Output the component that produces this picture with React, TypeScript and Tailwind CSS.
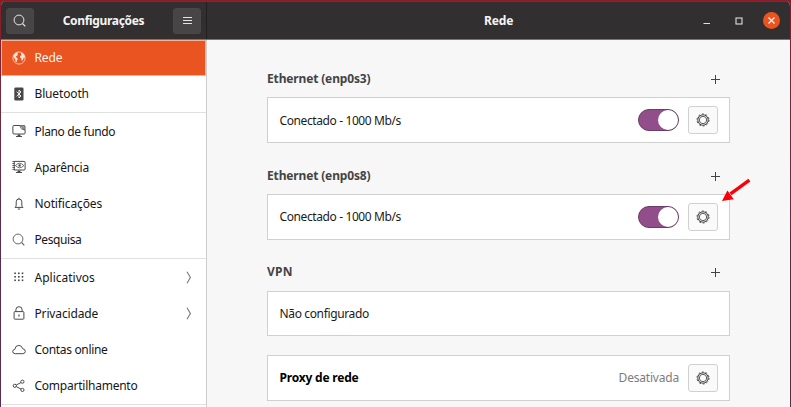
import type { ReactNode } from 'react';

const ink = '#4a4a4a';

function SearchIcon({ color }: { color: string }) {
  return (
    <svg width="14" height="14" viewBox="0 0 14 14" fill="none" stroke={color} strokeWidth="1">
      <circle cx="6" cy="6" r="4.9" />
      <path d="M9.5 9.5 L12.3 12.3" strokeWidth="1.2" />
    </svg>
  );
}

function GlobeIcon() {
  return (
    <svg width="14" height="14" viewBox="0 0 14 14">
      <circle cx="7" cy="7" r="6.1" fill="none" stroke="#fbcdbb" strokeWidth="0.9" />
      <path d="M1.2 4.6 L3 2.2 L5.4 1.2 L6.2 2 L5.2 3 L6 3.9 L4.6 5 L3.7 5.8 L5 6.9 L5.9 7.8 L5 9.6 L4.6 11.6 L3.4 10.2 L3.1 8 L1.5 6.2Z M9 1.4 L11.4 2.7 L12.8 5 L12.9 7.2 L11.9 6.2 L11.2 8.2 L10.1 10 L9.4 9 L9.3 7.3 L8 6.6 L8.1 5.1 L9.6 4.2 L9 3.1Z" fill="#fde4da" />
    </svg>
  );
}

function BluetoothIcon() {
  return (
    <svg width="14" height="14" viewBox="0 0 14 14">
      <rect x="2.3" y="0.4" width="9.2" height="13.2" rx="1.4" fill="#474747" />
      <path d="M4.6 4.7 L9 9 L7 11 V3 L9 5 L4.6 9.3" fill="none" stroke="#fff" strokeWidth="0.9" />
    </svg>
  );
}

function BackgroundIcon() {
  return (
    <svg width="14" height="14" viewBox="0 0 14 14" fill="none" stroke={ink}>
      <path d="M8 1.5 H2 Q0.9 1.5 0.9 2.6 V9 Q0.9 10 2 10 H12 Q13.1 10 13.1 9 V6" />
      <path d="M8.5 1.5 H12.2 Q13.1 1.5 13.1 2.4 V5.8 L11.4 5.2Z" fill="#999" strokeWidth="0.7" />
      <path d="M8.2 1.5 Q8 5.6 12.8 5.8" strokeWidth="0.8" />
      <path d="M5.6 10.5 H8.4 V12 H5.6Z" fill={ink} stroke="none" />
      <path d="M4 12.5 H10" />
    </svg>
  );
}

function AppearanceIcon() {
  return (
    <svg width="14" height="14" viewBox="0 0 14 14" fill="none" stroke={ink}>
      <path d="M2.2 1.4 H12 Q13.1 1.4 13.1 2.4 V9 Q13.1 10 12 10 H2.2Z" />
      <path d="M0.3 1.5 H3 M0.3 3.5 H3 M0.3 5.5 H3 M0.3 7.5 H3 M0.3 9.5 H3" strokeWidth="0.8" />
      <path d="M3.4 5.6 Q7.6 0.9 11.8 5.6 Q7.6 10 3.4 5.6Z" strokeWidth="0.8" />
      <circle cx="7.6" cy="5.5" r="1.2" fill={ink} stroke="none" />
      <path d="M5.6 10.5 H8.4 V12 H5.6Z" fill={ink} stroke="none" />
      <path d="M4 12.5 H10" />
    </svg>
  );
}

function BellIcon() {
  return (
    <svg width="14" height="14" viewBox="0 0 14 14" fill="none" stroke={ink} strokeWidth="1">
      <path d="M3 10.4 Q4.2 9.6 4.2 8 V4.8 Q4.2 2 7 2 Q9.8 2 9.8 4.8 V8 Q9.8 9.6 11 10.4Z" />
      <path d="M7 0.8 V2 M5.8 12 H8.2" />
    </svg>
  );
}

function GridIcon() {
  return (
    <svg width="14" height="14" viewBox="0 0 14 14" fill="#444">
      {[2.5, 6, 9.5].map((y) => [2.3, 6, 9.7].map((x) => <rect key={`${x}-${y}`} x={x} y={y} width="1.6" height="1.6" />))}
    </svg>
  );
}

function LockIcon() {
  return (
    <svg width="14" height="14" viewBox="0 0 14 14" fill="none" stroke={ink} strokeWidth="1">
      <rect x="2.1" y="5.6" width="9.8" height="7.6" rx="0.8" />
      <path d="M3.9 5.5 V3.7 Q3.9 0.7 7 0.7 Q10.1 0.7 10.1 3.7 V5.5" />
      <rect x="6.4" y="8.5" width="1.2" height="2" fill={ink} stroke="none" />
    </svg>
  );
}

function CloudIcon() {
  return (
    <svg width="14" height="14" viewBox="0 0 14 14" fill="none" stroke={ink} strokeWidth="1">
      <path d="M3.2 10.7 Q0.6 10.5 0.7 8.4 Q0.9 6.5 2.8 6.4 Q3.3 2.4 6.8 2.4 Q9.9 2.5 10.6 5.7 Q13.3 6 13.3 8.4 Q13.2 10.6 10.8 10.7Z" />
    </svg>
  );
}

function ShareIcon() {
  return (
    <svg width="14" height="14" viewBox="0 0 14 14" fill="none" stroke={ink} strokeWidth="1">
      <circle cx="2.8" cy="6.8" r="1.6" />
      <circle cx="10.4" cy="2.7" r="1.6" />
      <circle cx="10.4" cy="10.9" r="1.6" />
      <path d="M4.3 6 L9 3.5 M4.3 7.6 L9 10.1" />
    </svg>
  );
}

function GearIcon() {
  return (
    <svg width="14" height="14" viewBox="0 0 14 14" fill="none" stroke="#484848">
      <circle cx="7" cy="7" r="6" strokeWidth="1" strokeDasharray="1.885 1.885" />
      <circle cx="7" cy="7" r="5.2" strokeWidth="1" />
      <circle cx="7" cy="7" r="3.7" strokeWidth="0.9" />
    </svg>
  );
}

function NavItem({ icon, label, tracking, active, arrow, height = 'h-[36.25px]' }: {
  icon: ReactNode; label: string; tracking: string; active?: boolean; arrow?: boolean; height?: string;
}) {
  return (
    <div className={`flex shrink-0 items-center pr-[13px] ${height} ${active ? 'border border-[#f6b197] bg-[#e95420] pl-[10px] text-[#fff5ef]' : 'pl-[11px] text-[#161616]'}`}>
      {icon}
      <span className={`ml-[8.5px] flex-1 whitespace-nowrap pt-px ${tracking}`}>{label}</span>
      {arrow && (
        <svg width="8" height="13" viewBox="0 0 8 13" fill="none" stroke="#777" strokeWidth="1.1">
          <path d="M2 0.7 L5.4 6.5 L2 12.3" />
        </svg>
      )}
    </div>
  );
}

function SectionHeading({ label, tracking }: { label: string; tracking: string }) {
  return (
    <div className="flex h-[18px] items-center justify-between pr-[10px]">
      <h2 className={`font-bold text-[#444] ${tracking}`}>{label}</h2>
      <svg width="9" height="9" viewBox="0 0 9 9" stroke="#444"><path d="M4.5 0 V9 M0 4.5 H9" /></svg>
    </div>
  );
}

function Card({ children, height = 'h-[46px]' }: { children: ReactNode; height?: string }) {
  return <div className={`flex items-center border border-[#d0d0d0] bg-white pl-[11.5px] pr-[11px] text-[#1a1a1a] ${height}`}>{children}</div>;
}

function SettingsButton() {
  return (
    <button className="flex h-7 w-[30px] items-center justify-center rounded-[3px] border border-[#d0d0d0] bg-[#fafafa]">
      <GearIcon />
    </button>
  );
}

function Toggle() {
  return (
    <div className="mr-[9px] flex h-[22px] w-[41px] justify-end rounded-full border border-[#693d65] bg-[#924d8b]">
      <div className="size-5 rounded-full bg-white" />
    </div>
  );
}

export default function App() {
  return (
    <div className="h-[407px] w-[791px] overflow-hidden bg-linear-to-b from-[#8c1b27] to-[#552d50] to-60% pl-px pr-px pt-[1px] font-['Noto_Sans',sans-serif] text-[12px] leading-[18px]">
      <div className="flex h-[406px] flex-col overflow-hidden rounded-t-[5px] bg-[#f7f7f7]">
        <header className="flex h-[39px] shrink-0 border-b border-[#767474] border-t border-t-[#454343] bg-[#322f30]">
          <div className="flex w-[206px] shrink-0 items-center justify-between border-r border-[#211f20] pl-[5px] pr-[5px]">
            <button className="flex h-[26px] w-7 items-center justify-center rounded-[3px] border border-[#494748] bg-[#474545]"><SearchIcon color="#e4e4e4" /></button>
            <h1 className="whitespace-nowrap font-bold tracking-[-0.32px] text-[#f4f4f4]">Configurações</h1>
            <button className="flex h-[26px] w-7 items-center justify-center rounded-[3px] border border-[#494748] bg-[#474545]">
              <svg width="9" height="9" viewBox="0 0 9 9" stroke="#e4e4e4"><path d="M0 1.5 H9 M0 4.5 H9 M0 7.5 H9" /></svg>
            </button>
          </div>
          <div className="flex flex-1 items-center pr-[10px]">
            <h1 className="ml-[277px] flex-1 font-bold tracking-[-0.1px] text-[#f4f4f4]">Rede</h1>
            <svg width="8" height="8" viewBox="0 0 8 8" stroke="#e0e0e0"><path d="M0.5 6.5 H7" /></svg>
            <svg className="ml-6" width="8" height="8" viewBox="0 0 8 8" fill="none" stroke="#e0e0e0" strokeWidth="1.1"><rect x="1" y="1" width="6" height="6" /></svg>
            <button className="ml-5 flex size-[17px] items-center justify-center rounded-full bg-[#e95420]">
              <svg width="7" height="7" viewBox="0 0 7 7" stroke="#fff" strokeWidth="1.1"><path d="M0.5 0.5 L6.5 6.5 M6.5 0.5 L0.5 6.5" /></svg>
            </button>
          </div>
        </header>
        <div className="flex min-h-0 flex-1">
          <nav className="flex w-[206px] shrink-0 flex-col border-r border-[#cdcdcd] bg-white">
            <NavItem icon={<GlobeIcon />} label="Rede" tracking="tracking-[-0.1px]" active height="h-[35.5px]" />
            <NavItem icon={<BluetoothIcon />} label="Bluetooth" tracking="tracking-[-0.15px]" height="h-[36.5px]" />
            <div className="h-px shrink-0 bg-[#e0e0e0]" />
            <NavItem icon={<BackgroundIcon />} label="Plano de fundo" tracking="tracking-[-0.36px]" />
            <NavItem icon={<AppearanceIcon />} label="Aparência" tracking="tracking-[-0.2px]" />
            <NavItem icon={<BellIcon />} label="Notificações" tracking="tracking-[-0.12px]" />
            <NavItem icon={<SearchIcon color="#6a6a6a" />} label="Pesquisa" tracking="tracking-[-0.4px]" />
            <div className="h-px shrink-0 bg-[#e0e0e0]" />
            <NavItem icon={<GridIcon />} label="Aplicativos" tracking="tracking-[0px]" arrow />
            <NavItem icon={<LockIcon />} label="Privacidade" tracking="tracking-[-0.15px]" arrow />
            <NavItem icon={<CloudIcon />} label="Contas online" tracking="tracking-[-0.33px]" />
            <NavItem icon={<ShareIcon />} label="Compartilhamento" tracking="tracking-[-0.24px]" />
            <div className="h-px shrink-0 bg-[#e0e0e0]" />
          </nav>
          <main className="relative flex-1 pl-[60px] pr-[60px] pt-[30px]">
            <SectionHeading label="Ethernet (enp0s3)" tracking="tracking-[-0.15px]" />
            <div className="mt-[9px]">
              <Card><span className="flex-1 pt-px tracking-[-0.39px]">Conectado - 1000 Mb/s</span><Toggle /><SettingsButton /></Card>
            </div>
            <div className="mt-6"><SectionHeading label="Ethernet (enp0s8)" tracking="tracking-[-0.15px]" /></div>
            <div className="mt-[9px]">
              <Card><span className="flex-1 tracking-[-0.39px]">Conectado - 1000 Mb/s</span><Toggle /><SettingsButton /></Card>
            </div>
            <div className="mt-[23px]"><SectionHeading label="VPN" tracking="tracking-[0.2px]" /></div>
            <div className="mt-[10px]">
              <Card height="h-[45px]"><span className="tracking-[-0.36px]">Não configurado</span></Card>
            </div>
            <div className="mt-[19px]">
              <Card><span className="flex-1 font-bold tracking-[-0.2px] text-black">Proxy de rede</span><span className="mr-[9px] tracking-[-0.2px] text-[#7d7d7d]">Desativada</span><SettingsButton /></Card>
            </div>
            <svg className="absolute left-[514px] top-[138px]" width="32" height="26" viewBox="0 0 32 26">
              <path d="M28.4 2.2 L9.5 15.8" stroke="#fb0007" strokeWidth="3.4" />
              <path d="M1 23 L6.4 12.5 L12.8 21.2Z" fill="#fb0007" />
            </svg>
          </main>
        </div>
      </div>
    </div>
  );
}
